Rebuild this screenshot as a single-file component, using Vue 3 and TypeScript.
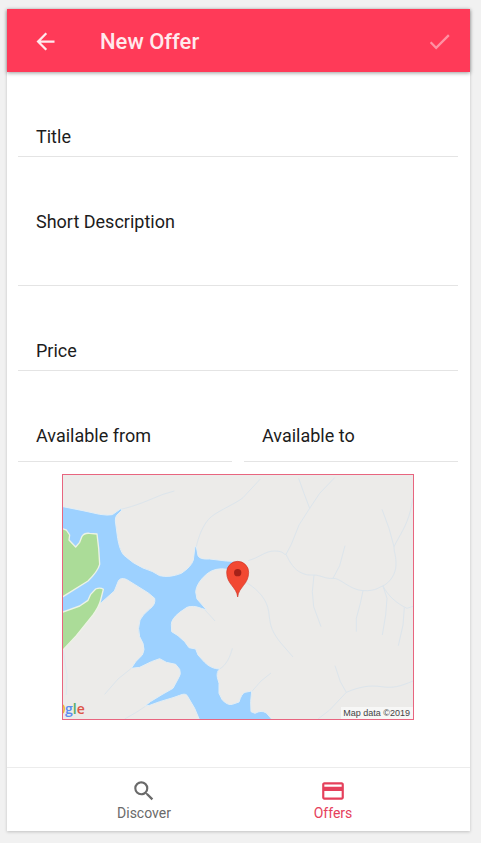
<script setup lang="ts">
import { ref } from 'vue'

const title = ref('')
const description = ref('')
const price = ref('')
const dateFrom = ref('')
const dateTo = ref('')

const streams: string[] = [
  'M172 103 C215 95 265 72 300 58 L334 48',
  'M400 215 C405 190 420 145 445 125 S520 85 540 68 L592 12',
  'M555 257 C590 248 605 228 635 228 S660 240 669 238 C680 262 695 285 714 293 S735 300 753 300 S790 313 810 310 S860 345 900 347 S950 335 965 330 C992 312 1000 285 999 262 S993 230 993 215',
  'M669 238 L685 208 L708 150 L740 100 L770 55 L815 8',
  'M740 100 L723 55 L707 10',
  'M993 215 L978 160 L957 103',
  'M993 215 C1010 180 1030 155 1042 108 L1050 70',
  'M810 310 L830 272 L846 212',
  'M753 300 L748 350 L752 395 L774 455',
  'M900 347 L892 385 L880 430 L880 470',
  'M960 333 L972 370 L968 420 L958 480',
  'M960 333 C975 362 1000 385 1032 400 L1050 394',
  'M1024 398 L1020 450 L1006 512',
  'M550 322 C590 348 612 375 617 410 S620 460 650 500 L690 546',
  'M566 650 L594 618 L624 594',
  'M816 572 L832 620 L850 652 L800 705 L765 732',
  'M850 652 C890 635 920 630 955 635 S1010 635 1050 618',
  'M421 400 L440 420 L456 438',
  'M470 582 C490 570 502 545 508 520',
  'M205 580 L165 612 L125 658',
  'M250 692 L220 712 L185 732',
]
</script>

<template>
  <div class="page">
    <main class="screen">
      <header class="bar">
        <button class="icon-button" type="button" aria-label="Back">
          <svg class="icon" viewBox="0 0 24 24"><path d="M20 11H7.83l5.59-5.59L12 4l-8 8 8 8 1.41-1.41L7.83 13H20v-2z" /></svg>
        </button>
        <h1>New Offer</h1>
        <button class="icon-button" type="button" aria-label="Save offer" disabled>
          <svg class="icon" viewBox="0 0 24 24"><path d="M9 16.17 4.83 12l-1.42 1.41L9 19 21 7l-1.41-1.41z" /></svg>
        </button>
      </header>

      <form class="form" @submit.prevent>
        <div class="field">
          <label for="title">Title</label>
          <input id="title" v-model="title" type="text" />
        </div>
        <div class="field">
          <label for="description">Short Description</label>
          <textarea id="description" v-model="description"></textarea>
        </div>
        <div class="field">
          <label for="price">Price</label>
          <input id="price" v-model="price" type="text" inputmode="decimal" />
        </div>
        <div class="dates">
          <div class="field date">
            <label for="from">Available from</label>
            <input id="from" v-model="dateFrom" type="text" />
          </div>
          <div class="field date">
            <label for="to">Available to</label>
            <input id="to" v-model="dateTo" type="text" />
          </div>
        </div>

        <div class="map">
          <svg class="map-art" viewBox="0 0 1050 732" preserveAspectRatio="xMidYMid slice">
            <rect width="1050" height="732" fill="#ecebe9" />
            <g fill="none" stroke="#dce5ec" stroke-width="3" stroke-linejoin="round">
              <path v-for="d in streams" :key="d" :d="d" />
            </g>
            <path
              fill="#9dd1ff" stroke="#e3eef5" stroke-width="3" stroke-linejoin="round"
              d="M-5 94 L60 107 L110 118 Q135 122 148 119 L172 102 L178 104 L162 120 Q156 126 157 138 L164 190 Q170 225 182 240 Q210 266 240 279 Q270 288 290 302 Q320 309 355 295 Q385 275 391 255 L396 215 L400 215 L405 242 Q410 254 440 252 L490 258 L535 260 L530 284 L495 283 Q455 276 430 298 Q400 325 398 350 L402 372 L431 405 L415 400 Q390 390 372 397 L350 412 Q325 432 325 448 L326 470 L345 482 L365 500 L378 518 L398 522 L405 540 L425 562 Q445 582 470 582 Q460 590 463 607 L468 625 L468 655 L478 675 Q495 692 508 688 L528 681 Q536 655 546 652 L566 648 L563 680 L564 710 L576 715 Q595 704 610 714 L631 738 L411 738 L395 700 L372 661 Q366 654 350 661 L330 668 L290 680 L260 691 L246 693 L262 680 L300 657 L330 640 L345 612 Q356 598 350 583 L338 568 L310 562 L290 551 L265 560 L230 577 L205 580 L218 560 L238 540 Q247 525 240 505 L230 485 Q223 460 231 435 Q238 420 260 402 Q279 388 275 370 L256 354 L216 329 L190 313 Q172 306 166 318 L154 348 L116 382 L0 450 L-5 450 Z"
            />
            <g fill="#abdc98" stroke="#edf3e6" stroke-width="4" stroke-linejoin="round">
              <path d="M-5 160 L10 165 L20 180 L18 195 L38 216 L50 202 L57 184 Q64 173 80 175 L102 177 L107 220 L110 268 Q105 288 75 318 L-5 368 Z" />
              <path d="M-5 413 L50 393 L75 376 L83 358 L98 342 Q112 336 121 343 L113 375 Q108 395 90 420 L40 482 L-5 530 Z" />
            </g>
            <path d="M0 525 L12 600 L10 660" fill="none" stroke="#dde8ef" stroke-width="3" />
            <path d="M524 366 C521 336 491 328 491 292 A33 33 0 0 1 557 292 C557 328 527 336 524 366 Z" fill="#f24832" stroke="#cf3526" stroke-width="2" />
            <circle cx="524" cy="293" r="11" fill="#a52219" />
            <path d="M0 690 Q7 702 0 714" fill="none" stroke="#e8b93c" stroke-width="5" />
          </svg>
          <span class="brand"><i class="b">g</i><i class="g">l</i><i class="r">e</i></span>
          <span class="credit">Map data ©2019</span>
        </div>
      </form>

      <nav class="tabs">
        <a class="tab" href="#discover">
          <svg class="tab-icon" viewBox="0 0 24 24"><path d="M15.5 14h-.79l-.28-.27A6.47 6.47 0 0 0 16 9.5 6.5 6.5 0 1 0 9.5 16c1.61 0 3.09-.59 4.23-1.57l.27.28v.79l5 4.99L20.49 19l-4.99-5zm-6 0C7.01 14 5 11.99 5 9.5S7.01 5 9.5 5 14 7.01 14 9.5 11.99 14 9.5 14z" /></svg>
          <span>Discover</span>
        </a>
        <a class="tab active" href="#offers" aria-current="page">
          <svg class="tab-icon" viewBox="0 0 24 24"><path d="M20 4H4c-1.11 0-1.99.89-1.99 2L2 18c0 1.11.89 2 2 2h16c1.11 0 2-.89 2-2V6c0-1.11-.89-2-2-2zm0 14H4v-6h16v6zm0-10H4V6h16v2z" /></svg>
          <span>Offers</span>
        </a>
      </nav>
    </main>
  </div>
</template>

<style>
body {
  background: #f1f1f1;
}
</style>

<style scoped>
.page {
  box-sizing: border-box;
  min-height: 100vh;
  padding: 9px 11px 12px 7px;
  display: flex;
  font-family: Roboto, 'Liberation Sans', sans-serif;
  color: #1c1c1c;
}
.screen {
  flex: 1;
  min-width: 0;
  display: flex;
  flex-direction: column;
  background: #fff;
  box-shadow: 0 1px 3px rgba(0, 0, 0, 0.2);
}
.bar {
  height: 63px;
  box-sizing: border-box;
  padding: 2px 17px 0 25px;
  display: flex;
  align-items: center;
  background: #ff3a58;
  color: #ffe9ed;
  box-shadow: 0 1px 4px rgba(0, 0, 0, 0.4);
}
h1 {
  flex: 1;
  margin: 0 0 0 41px;
  font-size: 22px;
  line-height: 28px;
  font-weight: 500;
}
.icon-button {
  padding: 0;
  border: 0;
  background: none;
  color: inherit;
  display: flex;
}
.icon-button:disabled {
  color: #ff91a3;
}
.icon {
  width: 27px;
  height: 27px;
  fill: currentColor;
}
.form {
  flex: 1;
  padding: 0 12px 0 11px;
}
.field {
  display: flex;
  align-items: flex-start;
  gap: 8px;
  padding: 55px 18px 9px;
  border-bottom: 1px solid #e4e4e4;
}
.field label {
  flex: none;
  font-size: 18px;
  line-height: 20px;
}
.field input,
.field textarea {
  flex: 1;
  width: 0;
  min-width: 0;
  height: 20px;
  box-sizing: border-box;
  padding: 0;
  border: 0;
  outline: 0;
  background: transparent;
  font: inherit;
  resize: none;
}
.field textarea {
  height: 64px;
}
.dates {
  display: grid;
  grid-template-columns: repeat(2, minmax(0, 1fr));
  gap: 12px;
}
.date {
  padding-bottom: 15px;
}
.map {
  position: relative;
  box-sizing: border-box;
  width: 80%;
  height: 246px;
  margin: 12px auto 0;
  border: 1px solid #e8657f;
  overflow: hidden;
}
.map-art {
  display: block;
  width: 100%;
  height: 100%;
}
.brand {
  position: absolute;
  left: 2px;
  bottom: 1px;
  font-family: 'Open Sans', sans-serif;
  font-size: 14px;
  line-height: 18px;
  font-weight: 600;
}
.brand i {
  font-style: normal;
}
.b {
  color: #5b8def;
}
.r {
  color: #dd5548;
}
.g {
  color: #56ab69;
}
.credit {
  position: absolute;
  right: 0;
  bottom: 0;
  padding: 0 3px 0 2px;
  background: #f7f7f6;
  color: #444;
  font-family: 'Liberation Sans', sans-serif;
  font-size: 9px;
  line-height: 12px;
}
.tabs {
  height: 64px;
  box-sizing: border-box;
  border-top: 1px solid #ececec;
  display: flex;
  justify-content: center;
}
.tab {
  flex: 1;
  max-width: 189px;
  padding-top: 10px;
  display: flex;
  flex-direction: column;
  align-items: center;
  color: #6a6a6a;
  font-size: 14px;
  line-height: 18px;
  text-decoration: none;
}
.tab-icon {
  width: 26px;
  height: 26px;
  fill: currentColor;
}
.active {
  color: #e5405b;
}
</style>
